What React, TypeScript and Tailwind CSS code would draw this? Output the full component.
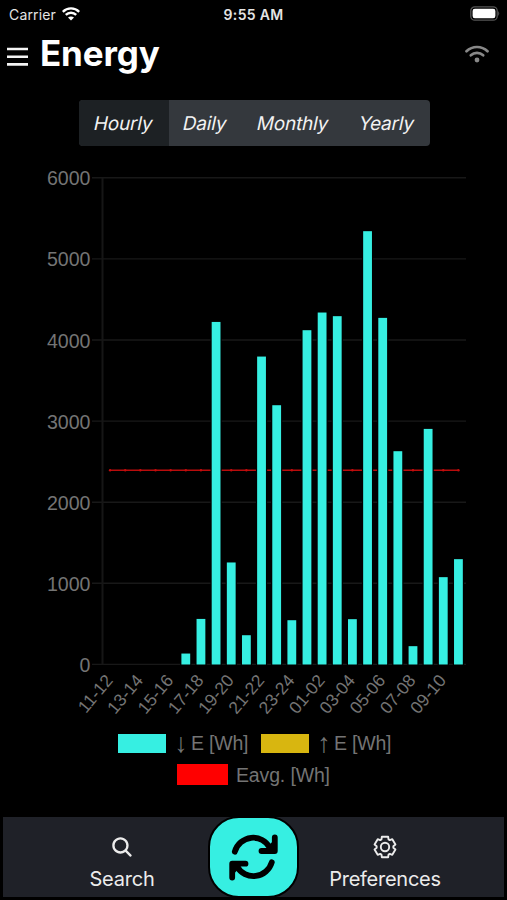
import { IoSearch } from "react-icons/io5";

const periods = [
  { label: "Hourly", width: "w-[90px]", active: true },
  { label: "Daily", width: "w-[73px]", active: false },
  { label: "Monthly", width: "w-[103px]", active: false },
  { label: "Yearly", width: "w-[85px]", active: false },
];

const consumption = [
  0, 0, 0, 0, 0, 135, 562, 4224, 1258, 361, 3797, 3197, 546, 4122, 4340, 4295, 559, 5343, 4274,
  2630, 226, 2905, 1077, 1299,
];

const hours = [
  "11-12", "13-14", "15-16", "17-18", "19-20", "21-22", "23-24", "01-02", "03-04", "05-06",
  "07-08", "09-10",
];

const ticks = [0, 1000, 2000, 3000, 4000, 5000, 6000];
const average = 2395;

const LEFT = 102.5;
const RIGHT = 466;
const BASE = 504.5;
const STEP = (RIGHT - LEFT) / 24;

const yOf = (value: number) => BASE - value * 0.0811;
const xOf = (index: number) => LEFT + STEP * (index + 0.5);

// Six flat teeth, four corners each: [angle offset, radius]
const gearPoints = [0, 60, 120, 180, 240, 300]
  .flatMap((tooth) =>
    [[-25, 8.4], [-17, 10.7], [17, 10.7], [25, 8.4]].map(([offset, radius]) => {
      const angle = ((tooth + offset) * Math.PI) / 180;
      return `${(13 + radius * Math.sin(angle)).toFixed(2)},${(13 - radius * Math.cos(angle)).toFixed(2)}`;
    }),
  )
  .join(" ");

function Gear() {
  return (
    <svg viewBox="0 0 26 26" className="size-[26px]" fill="none" stroke="currentColor" strokeWidth="1.9" strokeLinejoin="round">
      <polygon points={gearPoints} />
      <circle cx="13" cy="13" r="4.2" />
    </svg>
  );
}

function Wifi({ className }: { className: string }) {
  return (
    <svg viewBox="0 0 24 18" className={className} fill="none" stroke="currentColor" strokeWidth="2.7" strokeLinecap="round">
      <path d="M1.5 6.2 C7.3 0.6 16.7 0.6 22.5 6.2" />
      <path d="M5.8 10.3 C9.3 7.1 14.7 7.1 18.2 10.3" />
      <circle cx="12" cy="15" r="2.4" fill="currentColor" stroke="none" />
    </svg>
  );
}

function StatusBar() {
  return (
    <div className="grid h-7 grid-cols-3 items-center pr-[8px] pl-[9px] text-[14px] text-[#e4e4e4]">
      <div className="flex items-center gap-[6px]">
        <span className="tracking-[0.15px]">Carrier</span>
        <svg viewBox="0 0 18 14" className="-mt-[1px] h-[14px] w-[18px] text-white" fill="none" stroke="currentColor" strokeWidth="2.4">
          <path d="M0.8 4.8 C5.4 0.2 12.6 0.2 17.2 4.8" />
          <path d="M3.8 7.9 C6.7 5 11.3 5 14.2 7.9" />
          <path d="M9 13.6 L6 10.5 C7.7 9 10.3 9 12 10.5 Z" fill="currentColor" stroke="none" />
        </svg>
      </div>
      <span className="-ml-px text-center font-semibold tracking-[0.3px]">9:55 AM</span>
      <div className="flex justify-end">
        <svg viewBox="0 0 31 15" className="-mt-[1px] -mr-px h-[15px] w-[31px]">
          <rect x="1.8" y="0.8" width="26.4" height="13.4" rx="4" fill="none" stroke="#555" strokeWidth="1.3" />
          <rect x="3.6" y="2.7" width="22.8" height="9.6" rx="2.2" fill="#fff" />
          <path d="M29.2 5 Q31.2 7.5 29.2 10 Z" fill="#555" />
        </svg>
      </div>
    </div>
  );
}

function Header() {
  return (
    <header className="flex h-[52px] items-center pr-[18px] pl-[7px]">
      <svg viewBox="0 0 21 20" className="mt-[5px] h-5 w-[21px]" stroke="#f4f4f4" strokeWidth="2.6">
        <path d="M0 2 H21 M0 9.7 H21 M0 17.4 H21" />
      </svg>
      <h1 className="-mt-[3px] ml-[12px] text-[35px] leading-[44px] font-bold tracking-[-0.15px]">Energy</h1>
      <Wifi className="ml-auto h-[18px] w-6 text-[#888]" />
    </header>
  );
}

function Chart() {
  return (
    <svg viewBox="0 0 507 560" className="block h-[560px] w-[507px] font-['Liberation_Sans',sans-serif]">
      {ticks.map((tick) => (
        <g key={tick}>
          <line x1="92" x2={RIGHT} y1={yOf(tick) - 0.1} y2={yOf(tick) - 0.1} stroke="#181818" strokeWidth="1.4" />
          <text x="90.5" y={yOf(tick) + 7.4} textAnchor="end" fontSize="19.6" fill="#747474">
            {tick}
          </text>
        </g>
      ))}
      <line x1={LEFT} x2={LEFT} y1={yOf(6000)} y2={BASE} stroke="#161616" strokeWidth="2" />

      <line x1={xOf(0)} x2={xOf(23)} y1={yOf(average)} y2={yOf(average)} stroke="#b90c0c" strokeWidth="1.3" />
      {consumption.map((_, i) => (
        <circle key={i} cx={xOf(i)} cy={yOf(average)} r="1.2" fill="#c40c0c" />
      ))}

      {consumption.map((value, i) =>
        value > 0 ? (
          <rect
            key={i}
            x={xOf(i) - 4.4}
            y={yOf(value)}
            width="8.8"
            height={BASE - yOf(value)}
            fill="#36efe2"
            stroke="#000"
            strokeWidth="2.4"
            paintOrder="stroke"
          />
        ) : null,
      )}

      {hours.map((hour, i) => (
        <text
          key={hour}
          transform={`translate(${xOf(i * 2) - 1} 517) rotate(-50)`}
          y="6"
          textAnchor="end"
          fontSize="17.4"
          fill="#747474"
        >
          {hour}
        </text>
      ))}
    </svg>
  );
}

function Arrow({ down = false }: { down?: boolean }) {
  return (
    <span className="mr-[5px] flex w-[10px] justify-center text-[27px]">{down ? "↓" : "↑"}</span>
  );
}

function Legend() {
  return (
    <div className="flex flex-col pt-[12px] font-['Liberation_Sans',sans-serif] text-[19.5px] leading-[22px] text-[#747474]">
      <div className="flex h-[22px] items-center pl-[118px]">
        <span className="h-[19px] w-12 bg-[#36efe2]" />
        <span className="ml-[10px] flex w-[72px] tracking-[-0.2px] whitespace-nowrap">
          <Arrow down /> E [Wh]
        </span>
        <span className="ml-[13px] h-[19px] w-12 bg-[#d8b610]" />
        <span className="ml-[10px] flex w-[72px] tracking-[-0.2px] whitespace-nowrap">
          <Arrow /> E [Wh]
        </span>
      </div>
      <div className="mt-[9px] flex h-[22px] items-center pl-[177px]">
        <span className="h-[21px] w-[51px] bg-[#ff0000]" />
        <span className="mt-[2px] ml-[8px] tracking-[-0.15px]">Eavg. [Wh]</span>
      </div>
    </div>
  );
}

function TabBar() {
  return (
    <nav className="mx-[3px] flex h-[80px] bg-[#1f2128] text-[20px] text-[#ececec]">
      <button className="flex w-[205px] flex-col items-center pt-[18px] pl-[33px]">
        <IoSearch className="size-6" />
        <span className="mt-[8px] leading-6 tracking-[-0.2px]">Search</span>
      </button>
      <button className="-mt-px flex h-[82px] w-[91px] items-center justify-center rounded-[31px] border-2 border-black bg-[#36efe2]">
        <svg viewBox="0 0 52 52" className="size-[52px]" fill="none" stroke="#000" strokeWidth="5.8" strokeLinecap="round" strokeLinejoin="round">
          <path d="M6.8 20.7 A19 19 0 0 1 42 17" />
          <path d="M46.8 6.3 V20 H33.5" />
          <path d="M46.8 8 V20 H36 Z" fill="#000" stroke="none" />
          <path d="M43.8 31.3 A19 19 0 0 1 9 35.5" />
          <path d="M4.2 46.5 V32.7 H17.5" />
          <path d="M4.2 44.7 V32.7 H15 Z" fill="#000" stroke="none" />
        </svg>
      </button>
      <button className="flex w-[205px] flex-col items-center pt-[17px] pr-[33px]">
        <Gear />
        <span className="mt-[7px] leading-6 tracking-[-0.25px]">Preferences</span>
      </button>
    </nav>
  );
}

export default function App() {
  return (
    <div className="flex h-[900px] w-[507px] flex-col overflow-hidden bg-black font-['Inter',sans-serif] text-white">
      <StatusBar />
      <Header />

      <div className="mt-[20px] ml-[79px] flex h-[46px] w-[351px] overflow-hidden rounded-[4px] bg-[#34383d] text-[19px] tracking-[-0.2px] text-[#f2f2f2]">
        {periods.map((period) => (
          <button
            key={period.label}
            className={`${period.width} ${period.active ? "bg-[#1d2124]" : ""} flex items-center justify-center`}
          >
            <span className="mt-[2px] mr-[2px] -skew-x-12">{period.label}</span>
          </button>
        ))}
      </div>

      <div className="mt-[14px]">
        <Chart />
      </div>
      <Legend />

      <div className="mt-auto pb-[3px]">
        <TabBar />
      </div>
    </div>
  );
}
